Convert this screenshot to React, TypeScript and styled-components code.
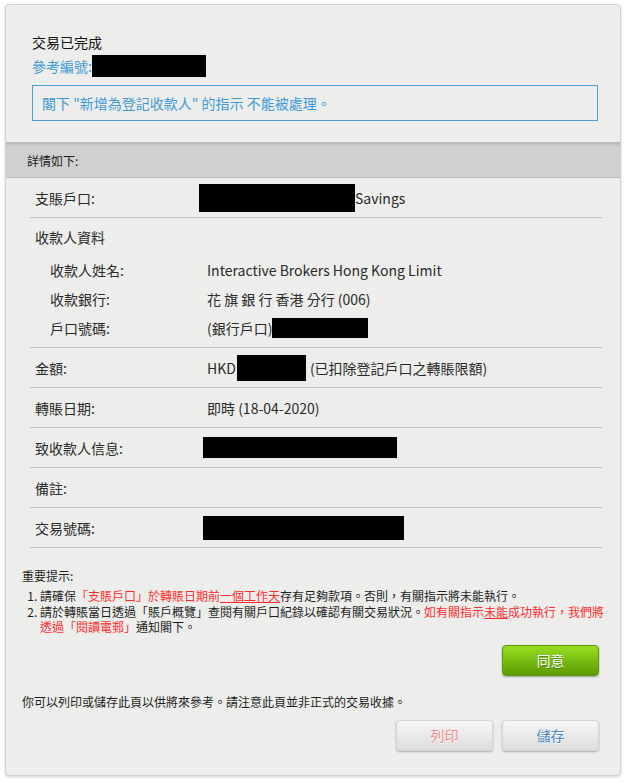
import React from "react";
import styled, { createGlobalStyle } from "styled-components";

const GlobalStyle = createGlobalStyle`
  html, body { margin: 0; padding: 0; background: #ffffff; }
  body {
    font-family: "Noto Sans CJK TC", "Noto Sans", sans-serif;
    color: #1e1e1e;
  }
  * { box-sizing: border-box; }
`;

const Page = styled.div`
  padding: 4px 4px 4px 5px;
`;

const Panel = styled.div`
  width: 616px;
  border: 1px solid #d2d3d0;
  border-radius: 4px;
  background: #edeeeb;
  box-shadow: 0 1px 3px rgba(0, 0, 0, 0.18);
  overflow: hidden;
`;

const TopSection = styled.div`
  padding: 27px 22px 21px 26px;
`;

const Title = styled.div`
  font-size: 14px;
  line-height: 20px;
  color: #111;
`;

const RefLine = styled.div`
  margin-top: 2px;
  height: 24px;
  display: flex;
  align-items: center;
  font-size: 14px;
  color: #3d9ad6;
`;

const Notice = styled.div`
  margin-top: 7px;
  height: 36px;
  border: 1px solid #4aa0d8;
  padding: 0 9px;
  display: flex;
  align-items: center;
  font-size: 14px;
  color: #3d9ad6;
  white-space: pre;
`;

const Band = styled.div`
  height: 36px;
  padding: 2px 0 0 21px;
  display: flex;
  align-items: center;
  background: #d0d0d0;
  border-bottom: 1px solid #b9b9b9;
  box-shadow: inset 0 4px 4px -3px rgba(0, 0, 0, 0.22);
  font-size: 12px;
  color: #222;
`;

const Details = styled.div`
  margin: 0 18px 0 24px;
`;

const Row = styled.div`
  height: 40px;
  border-bottom: 1px solid #c3c4c2;
  padding-left: 5px;
  display: grid;
  grid-template-columns: 172px 1fr;
  align-items: center;
  font-size: 14px;
`;

const Label = styled.div`
  color: #2a2a2a;
`;

const Value = styled.div`
  display: flex;
  align-items: center;
  color: #2a2a2a;
  white-space: pre;
`;

const PayeeBlock = styled.div`
  border-bottom: 1px solid #c3c4c2;
  padding-bottom: 5px;
  font-size: 14px;
`;

const PayeeHeader = styled.div`
  height: 37px;
  padding-left: 5px;
  display: flex;
  align-items: center;
  color: #2a2a2a;
`;

const SubRow = styled.div`
  height: 29px;
  padding-left: 20px;
  display: grid;
  grid-template-columns: 157px 1fr;
  align-items: center;
`;

const Redact = styled.span<{ $w: number; $h: number; $ml?: number; $mr?: number }>`
  display: inline-block;
  flex: none;
  width: ${(p) => p.$w}px;
  height: ${(p) => p.$h}px;
  margin-left: ${(p) => p.$ml ?? 0}px;
  margin-right: ${(p) => p.$mr ?? 0}px;
  background: #000;
`;

const Notes = styled.div`
  padding: 20px 8px 24px 16px;
`;

const NotesTitle = styled.div`
  font-size: 12px;
  line-height: 16px;
  color: #1e1e1e;
`;

const NoteList = styled.ol`
  margin: 4px 0 0;
  padding-left: 18px;
  font-size: 12px;
  line-height: 15.5px;
  color: #1e1e1e;
`;

const Red = styled.span<{ $u?: boolean }>`
  color: #ff2d2d;
  text-decoration: ${(p) => (p.$u ? "underline" : "none")};
`;

const ButtonRow = styled.div<{ $mt: number }>`
  margin-top: ${(p) => p.$mt}px;
  padding-right: 13px;
  display: flex;
  justify-content: flex-end;
  gap: 9px;
`;

const GreenButton = styled.button`
  width: 97px;
  height: 31px;
  border: 1px solid #5a9a04;
  border-radius: 4px;
  background: linear-gradient(#98de22, #5c9c02);
  box-shadow: 0 1px 2px rgba(0, 0, 0, 0.35);
  color: #fff;
  font-family: inherit;
  font-size: 14px;
  text-shadow: 0 1px 1px rgba(0, 0, 0, 0.35);
  padding: 0;
  cursor: pointer;
`;

const GrayButton = styled.button<{ $tone: "red" | "blue" }>`
  width: 97px;
  height: 31px;
  border: 1px solid #d6d6d6;
  border-radius: 4px;
  background: linear-gradient(#f7f7f7, #dcdcdc);
  box-shadow: 0 1px 2px rgba(0, 0, 0, 0.3);
  color: ${(p) => (p.$tone === "red" ? "#ef8a8a" : "#4a87c6")};
  font-family: inherit;
  font-size: 14px;
  text-shadow: 0 1px 0 #fff;
  padding: 0;
  cursor: pointer;
`;

const FooterNote = styled.div`
  margin-top: 18px;
  font-size: 12px;
  line-height: 16px;
  color: #1e1e1e;
`;

export default function App() {
  return (
    <Page>
      <GlobalStyle />
      <Panel>
        <TopSection>
          <Title>交易已完成</Title>
          <RefLine>
            參考編號:
            <Redact $w={114} $h={22} />
          </RefLine>
          <Notice>閣下 "新增為登記收款人" 的指示 不能被處理。</Notice>
        </TopSection>
        <Band>詳情如下:</Band>
        <Details>
          <Row>
            <Label>支賬戶口:</Label>
            <Value>
              <Redact $w={156} $h={28} $ml={-8} />
              Savings
            </Value>
          </Row>
          <PayeeBlock>
            <PayeeHeader>收款人資料</PayeeHeader>
            <SubRow>
              <Label>收款人姓名:</Label>
              <Value>Interactive Brokers Hong Kong Limit</Value>
            </SubRow>
            <SubRow>
              <Label>收款銀行:</Label>
              <Value>花 旗 銀 行 香港 分行 (006)</Value>
            </SubRow>
            <SubRow>
              <Label>戶口號碼:</Label>
              <Value>
                (銀行戶口)
                <Redact $w={96} $h={20} />
              </Value>
            </SubRow>
          </PayeeBlock>
          <Row>
            <Label>金額:</Label>
            <Value>
              HKD
              <Redact $w={69} $h={26} $ml={1} $mr={4} />
              (已扣除登記戶口之轉賬限額)
            </Value>
          </Row>
          <Row>
            <Label>轉賬日期:</Label>
            <Value>即時 (18-04-2020)</Value>
          </Row>
          <Row>
            <Label>致收款人信息:</Label>
            <Value>
              <Redact $w={194} $h={21} $ml={-4} />
            </Value>
          </Row>
          <Row>
            <Label>備註:</Label>
            <Value />
          </Row>
          <Row>
            <Label>交易號碼:</Label>
            <Value>
              <Redact $w={201} $h={24} $ml={-4} />
            </Value>
          </Row>
        </Details>
        <Notes>
          <NotesTitle>重要提示:</NotesTitle>
          <NoteList>
            <li>
              請確保<Red>「支賬戶口」於轉賬日期前</Red>
              <Red $u>一個工作天</Red>存有足夠款項。否則，有關指示將未能執行。
            </li>
            <li>
              請於轉賬當日透過「賬戶概覽」查閱有關戶口紀錄以確認有關交易狀況。
              <Red>如有關指示</Red>
              <Red $u>未能</Red>
              <Red>
                成功執行，我們將
                <br />
                透過「閱讀電郵」
              </Red>
              通知閣下。
            </li>
          </NoteList>
          <ButtonRow $mt={10}>
            <GreenButton>同意</GreenButton>
          </ButtonRow>
          <FooterNote>你可以列印或儲存此頁以供將來參考。請注意此頁並非正式的交易收據。</FooterNote>
          <ButtonRow $mt={10}>
            <GrayButton $tone="red">列印</GrayButton>
            <GrayButton $tone="blue">儲存</GrayButton>
          </ButtonRow>
        </Notes>
      </Panel>
    </Page>
  );
}
